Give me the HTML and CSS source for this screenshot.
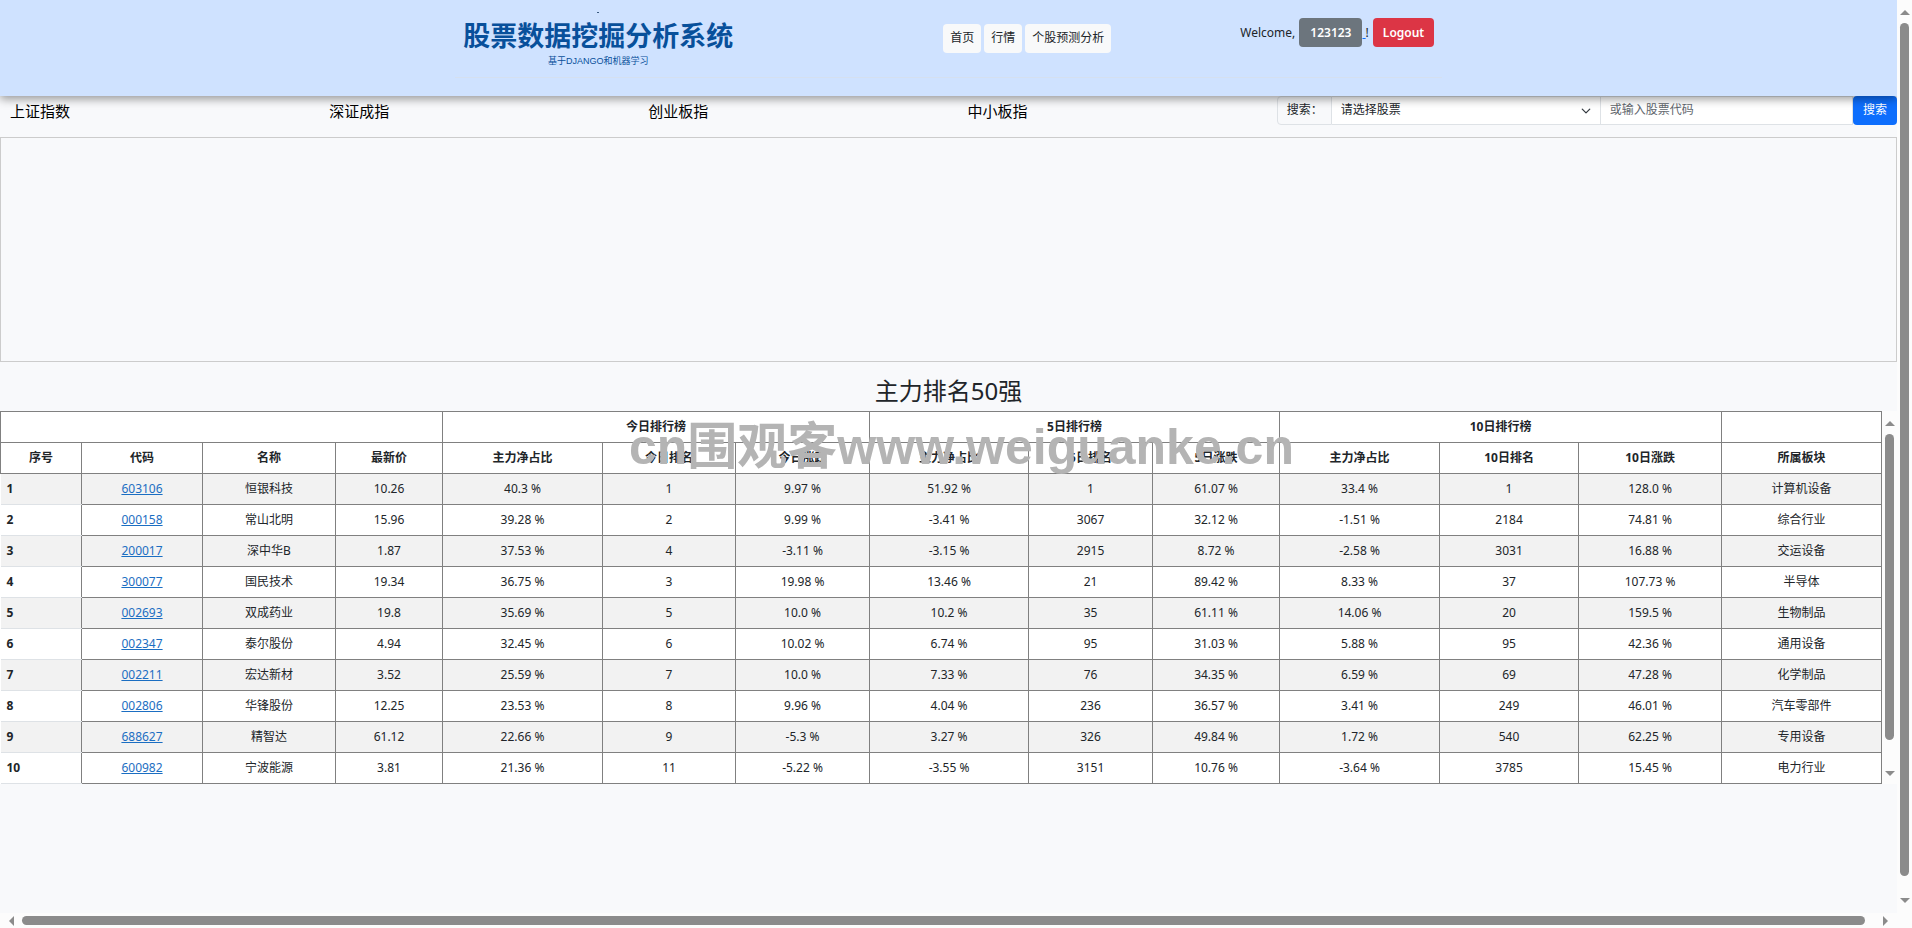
FILE: index.html
```html
<!DOCTYPE html>
<html lang="zh-CN">
<head>
    <meta charset="UTF-8">
    <meta name="viewport" content="width=device-width, initial-scale=1.0">
    <title>股票数据挖掘分析系统</title>
    <link rel="stylesheet" href="styles.css">
</head>
<body>
<div class="window">
    <div class="page">
        <!-- 顶部导航 -->
        <header class="header">
            <div class="header-inner">
                <div class="logo">
                    <span class="logo-dot"></span>
                    <div class="logo-title">股票数据挖掘分析系统</div>
                    <div class="logo-sub">基于DJANGO和机器学习</div>
                </div>
                <nav class="nav">
                    <a href="#">首页</a>
                    <a href="#">行情</a>
                    <a href="#">个股预测分析</a>
                </nav>
                <div class="user">
                    <span>Welcome,</span>
                    <a class="user-link" href="#"><button type="button" class="btn btn-gray">123123</button>&nbsp;</a><span class="bang">!</span>
                    <button type="button" class="btn btn-red">Logout</button>
                </div>
            </div>
        </header>

        <!-- 指数和搜索 -->
        <div class="index-bar">
            <div class="index-name">上证指数</div>
            <div class="index-name">深证成指</div>
            <div class="index-name">创业板指</div>
            <div class="index-name">中小板指</div>
            <form class="search-form" action="#" method="GET">
                <label class="search-label" for="stock">搜索：</label>
                <div class="select-wrap">
                    <select id="stock" name="stock">
                        <option>请选择股票</option>
                    </select>
                    <svg class="chevron" viewBox="0 0 16 16" width="10" height="10"><path d="M2 5l6 6 6-6" fill="none" stroke="#343a40" stroke-width="2" stroke-linecap="round" stroke-linejoin="round"/></svg>
                </div>
                <input type="text" name="code" aria-label="股票代码" placeholder="或输入股票代码">
                <button type="submit">搜索</button>
            </form>
        </div>

        <div class="chart"></div>

        <!-- 排行榜 -->
        <h2>主力排名50强</h2>
        <div class="rank">
            <table>
                <colgroup>
                    <col class="c1"><col class="c2"><col class="c3"><col class="c4"><col class="c5"><col class="c6"><col class="c7">
                    <col class="c8"><col class="c9"><col class="c10"><col class="c11"><col class="c12"><col class="c13"><col class="c14">
                </colgroup>
                <thead>
                    <tr>
                        <th colspan="4"></th>
                        <th colspan="3">今日排行榜</th>
                        <th colspan="3">5日排行榜</th>
                        <th colspan="3">10日排行榜</th>
                        <th></th>
                    </tr>
                    <tr><th>序号</th><th>代码</th><th>名称</th><th>最新价</th><th>主力净占比</th><th>今日排名</th><th>今日涨跌</th><th>主力净占比</th><th>5日排名</th><th>5日涨跌</th><th>主力净占比</th><th>10日排名</th><th>10日涨跌</th><th>所属板块</th></tr>
                </thead>
                <tbody>
                    <tr><th>1</th><td><a href="#">603106</a></td><td>恒银科技</td><td>10.26</td><td>40.3 %</td><td>1</td><td>9.97 %</td><td>51.92 %</td><td>1</td><td>61.07 %</td><td>33.4 %</td><td>1</td><td>128.0 %</td><td>计算机设备</td></tr>
                    <tr><th>2</th><td><a href="#">000158</a></td><td>常山北明</td><td>15.96</td><td>39.28 %</td><td>2</td><td>9.99 %</td><td>-3.41 %</td><td>3067</td><td>32.12 %</td><td>-1.51 %</td><td>2184</td><td>74.81 %</td><td>综合行业</td></tr>
                    <tr><th>3</th><td><a href="#">200017</a></td><td>深中华B</td><td>1.87</td><td>37.53 %</td><td>4</td><td>-3.11 %</td><td>-3.15 %</td><td>2915</td><td>8.72 %</td><td>-2.58 %</td><td>3031</td><td>16.88 %</td><td>交运设备</td></tr>
                    <tr><th>4</th><td><a href="#">300077</a></td><td>国民技术</td><td>19.34</td><td>36.75 %</td><td>3</td><td>19.98 %</td><td>13.46 %</td><td>21</td><td>89.42 %</td><td>8.33 %</td><td>37</td><td>107.73 %</td><td>半导体</td></tr>
                    <tr><th>5</th><td><a href="#">002693</a></td><td>双成药业</td><td>19.8</td><td>35.69 %</td><td>5</td><td>10.0 %</td><td>10.2 %</td><td>35</td><td>61.11 %</td><td>14.06 %</td><td>20</td><td>159.5 %</td><td>生物制品</td></tr>
                    <tr><th>6</th><td><a href="#">002347</a></td><td>泰尔股份</td><td>4.94</td><td>32.45 %</td><td>6</td><td>10.02 %</td><td>6.74 %</td><td>95</td><td>31.03 %</td><td>5.88 %</td><td>95</td><td>42.36 %</td><td>通用设备</td></tr>
                    <tr><th>7</th><td><a href="#">002211</a></td><td>宏达新材</td><td>3.52</td><td>25.59 %</td><td>7</td><td>10.0 %</td><td>7.33 %</td><td>76</td><td>34.35 %</td><td>6.59 %</td><td>69</td><td>47.28 %</td><td>化学制品</td></tr>
                    <tr><th>8</th><td><a href="#">002806</a></td><td>华锋股份</td><td>12.25</td><td>23.53 %</td><td>8</td><td>9.96 %</td><td>4.04 %</td><td>236</td><td>36.57 %</td><td>3.41 %</td><td>249</td><td>46.01 %</td><td>汽车零部件</td></tr>
                    <tr><th>9</th><td><a href="#">688627</a></td><td>精智达</td><td>61.12</td><td>22.66 %</td><td>9</td><td>-5.3 %</td><td>3.27 %</td><td>326</td><td>49.84 %</td><td>1.72 %</td><td>540</td><td>62.25 %</td><td>专用设备</td></tr>
                    <tr><th>10</th><td><a href="#">600982</a></td><td>宁波能源</td><td>3.81</td><td>21.36 %</td><td>11</td><td>-5.22 %</td><td>-3.55 %</td><td>3151</td><td>10.76 %</td><td>-3.64 %</td><td>3785</td><td>15.45 %</td><td>电力行业</td></tr>
                </tbody>
            </table>
            <div class="bar bar-table">
                <span class="arrow up"></span>
                <span class="thumb"></span>
                <span class="arrow down"></span>
            </div>
            <div class="watermark">cn围观客www.weiguanke.cn</div>
        </div>
    </div>

    <!-- 滚动条 -->
    <div class="bar bar-page">
        <span class="arrow up"></span>
        <span class="thumb"></span>
        <span class="arrow down"></span>
    </div>
    <div class="bar bar-bottom">
        <span class="arrow left"></span>
        <span class="thumb"></span>
        <span class="arrow right"></span>
    </div>
</div>
</body>
</html>
```
FILE: styles.css
```css
* {
    box-sizing: border-box;
}
body {
    margin: 0;
    font-family: "Noto Sans", "Noto Sans CJK SC", sans-serif;
    font-size: 12px;
    line-height: 18px;
    color: #212529;
    background-color: #fcfcfc;
}
button, input, select {
    font: inherit;
}
.window {
    display: grid;
    grid-template-columns: minmax(0, 1fr) 15px;
    grid-template-rows: minmax(0, 1fr) 15px;
    height: 100vh;
}
.page {
    overflow: hidden;
    background-color: #f8f9fb;
}

/* 顶部 */
.header {
    position: relative;
    z-index: 2;
    height: 96px;
    background-color: #cfe2ff;
    box-shadow: 0 3px 9px rgba(0, 0, 0, 0.4);
}
.header-inner {
    display: grid;
    grid-template-columns: 488px 297px 1fr;
    align-items: start;
    width: 52%;
    min-width: 986px;
    height: 78px;
    margin: 0 auto;
    border-bottom: 1px solid #d5e0f0;
}
.logo {
    display: flex;
    flex-direction: column;
    align-items: center;
    width: 286px;
    padding-top: 12px;
    color: #08509b;
}
.logo-dot {
    width: 2px;
    height: 1px;
    background-color: #3b5b80;
}
.logo-title {
    margin-top: 5px;
    font-size: 27px;
    font-weight: bold;
    line-height: 36px;
    white-space: nowrap;
}
.logo-sub {
    font-family: "Liberation Sans", "Noto Sans CJK SC", sans-serif;
    font-size: 9px;
    line-height: 14px;
}
.nav {
    display: flex;
    gap: 3px;
    padding-top: 24px;
}
.nav a {
    padding: 5px 7px 6px;
    border-radius: 4px;
    background-color: #f8f9fa;
    color: #212529;
    text-decoration: none;
}
.user {
    display: flex;
    align-items: center;
    gap: 4px;
    padding-top: 18px;
}
.btn {
    height: 29px;
    padding: 0 11px;
    border: none;
    border-radius: 4px;
    color: #fff;
    font-weight: 600;
    cursor: pointer;
}
.btn-gray {
    background-color: #6c757d;
}
.btn-red {
    padding: 0 10px;
    background-color: #dc3545;
}
.user-link {
    color: #0d6efd;
}
.bang {
    margin-left: -4px;
}

/* 指数 */
.index-bar {
    display: grid;
    grid-template-columns: repeat(4, 319fr) 620fr;
    height: 41px;
}
.index-name {
    padding: 4px 10px;
    font-size: 15px;
    line-height: 22px;
    color: #000;
}
.search-form {
    display: flex;
    height: 29px;
}
.search-label {
    width: 55px;
    padding: 4px 9px;
    border: 1px solid #dee2e6;
    border-radius: 4px 0 0 4px;
    white-space: nowrap;
}
.select-wrap {
    position: relative;
    flex: 269;
}
.search-form select {
    width: 100%;
    height: 29px;
    padding: 0 9px 2px;
    border: 1px solid #dee2e6;
    border-left: none;
    background-color: #fff;
    color: #212529;
    appearance: none;
}
.chevron {
    position: absolute;
    top: 10px;
    right: 10px;
    pointer-events: none;
}
.search-form input {
    flex: 233;
    min-width: 0;
    padding: 0 9px 2px;
    border: 1px solid #dee2e6;
    border-left: none;
    background-color: #fff;
}
.search-form input::placeholder {
    color: #5f666d;
}
.search-form button {
    width: 44px;
    padding: 0 0 2px;
    border: none;
    border-radius: 4px;
    background-color: #0d6efd;
    color: #fff;
    cursor: pointer;
}
.chart {
    height: 225px;
    border: 1px solid #ccc;
}

/* 排行榜 */
h2 {
    margin: 0;
    padding: 14px 0 5px;
    font-size: 24px;
    font-weight: 400;
    line-height: 30px;
    text-align: center;
}
.rank {
    position: relative;
    display: flex;
    background-color: #fcfcfc;
}
table {
    flex: 1;
    table-layout: fixed;
    width: 100%;
    border-collapse: collapse;
    background-color: #fff;
}
th, td {
    height: 31px;
    padding: 4px 6px;
    border: 1px solid #808080;
    text-align: center;
}
th {
    font-weight: bold;
}
tbody tr:nth-child(odd) {
    background-color: #f2f2f2;
}
tbody th {
    border-width: 0 0 1px;
    border-color: #dee2e6;
    text-align: left;
}
td a {
    color: #1b6ec2;
}
.c1 { width: 81px; }
.c2 { width: 121px; }
.c3, .c6 { width: 133px; }
.c4 { width: 107px; }
.c5, .c11, .c14 { width: 160px; }
.c7 { width: 134px; }
.c8 { width: 159px; }
.c9 { width: 124px; }
.c10 { width: 127px; }
.c12 { width: 139px; }
.c13 { width: 143px; }
.watermark {
    position: absolute;
    top: 7px;
    left: 0;
    right: 0;
    padding-left: 26px;
    color: #b4b4b4;
    font-family: "Liberation Sans", "Noto Sans CJK SC", sans-serif;
    font-size: 50px;
    font-weight: bold;
    line-height: 58px;
    text-align: center;
    pointer-events: none;
}

/* 滚动条 */
.bar {
    display: flex;
    flex-direction: column;
    align-items: center;
    gap: 8px;
    background-color: #fcfcfc;
}
.thumb {
    flex: 1;
    width: 9px;
    border-radius: 5px;
    background-color: #8b8b8b;
}
.arrow {
    border: 5px solid transparent;
}
.up {
    border-top: none;
    border-bottom-color: #8b8b8b;
}
.down {
    border-bottom: none;
    border-top-color: #8b8b8b;
}
.left {
    border-left: none;
    border-right-color: #8b8b8b;
}
.right {
    border-right: none;
    border-left-color: #8b8b8b;
}
.bar-page {
    padding: 10px 0;
}
.bar-page .down {
    margin-top: 14px;
}
.bar-table {
    width: 15px;
    padding: 10px 0 8px;
}
.bar-table .down {
    margin-top: 23px;
}
.bar-bottom {
    flex-direction: row;
    padding: 0 9px;
}
.bar-bottom .thumb {
    width: auto;
    height: 9px;
}
.bar-bottom .right {
    margin-left: 10px;
}
```
